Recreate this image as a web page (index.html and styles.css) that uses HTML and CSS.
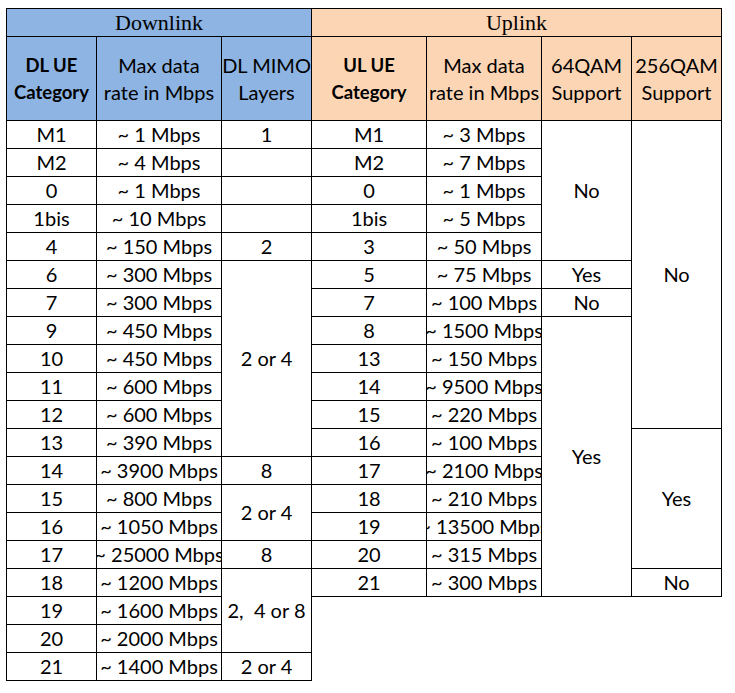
FILE: index.html
```html
<!DOCTYPE html>
<html>
<head>
<meta charset="utf-8">
<link rel="stylesheet" href="styles.css">
</head>
<body>
<table class="ue">
  <colgroup>
    <col class="w90"><col class="w125"><col class="w90">
    <col class="w115"><col class="w115"><col class="w90"><col class="w90">
  </colgroup>
  <tr class="h1">
    <th colspan="3" class="dl title"><div class="c">Downlink</div></th>
    <th colspan="4" class="ul title"><div class="c">Uplink</div></th>
  </tr>
  <tr class="h2">
    <th class="dl"><div class="c b">DL UE<br>Category</div></th>
    <th class="dl"><div class="c">Max data<br>rate in Mbps</div></th>
    <th class="dl"><div class="c">DL MIMO<br>Layers</div></th>
    <th class="ul"><div class="c b">UL UE<br>Category</div></th>
    <th class="ul"><div class="c">Max data<br>rate in Mbps</div></th>
    <th class="ul"><div class="c">64QAM<br>Support</div></th>
    <th class="ul"><div class="c">256QAM<br>Support</div></th>
  </tr>
  <tr><td><div class="c">M1</div></td><td><div class="c">~ 1 Mbps</div></td><td><div class="c">1</div></td><td><div class="c">M1</div></td><td><div class="c">~ 3 Mbps</div></td><td rowspan="5"><div class="c">No</div></td><td rowspan="11"><div class="c">No</div></td></tr>
  <tr><td><div class="c">M2</div></td><td><div class="c">~ 4 Mbps</div></td><td></td><td><div class="c">M2</div></td><td><div class="c">~ 7 Mbps</div></td></tr>
  <tr><td><div class="c">0</div></td><td><div class="c">~ 1 Mbps</div></td><td></td><td><div class="c">0</div></td><td><div class="c">~ 1 Mbps</div></td></tr>
  <tr><td><div class="c">1bis</div></td><td><div class="c">~ 10 Mbps</div></td><td></td><td><div class="c">1bis</div></td><td><div class="c">~ 5 Mbps</div></td></tr>
  <tr><td><div class="c">4</div></td><td><div class="c">~ 150 Mbps</div></td><td><div class="c">2</div></td><td><div class="c">3</div></td><td><div class="c">~ 50 Mbps</div></td></tr>
  <tr><td><div class="c">6</div></td><td><div class="c">~ 300 Mbps</div></td><td rowspan="7"><div class="c">2 or 4</div></td><td><div class="c">5</div></td><td><div class="c">~ 75 Mbps</div></td><td><div class="c">Yes</div></td></tr>
  <tr><td><div class="c">7</div></td><td><div class="c">~ 300 Mbps</div></td><td><div class="c">7</div></td><td><div class="c">~ 100 Mbps</div></td><td><div class="c">No</div></td></tr>
  <tr><td><div class="c">9</div></td><td><div class="c">~ 450 Mbps</div></td><td><div class="c">8</div></td><td><div class="c">~ 1500 Mbps</div></td><td rowspan="10"><div class="c">Yes</div></td></tr>
  <tr><td><div class="c">10</div></td><td><div class="c">~ 450 Mbps</div></td><td><div class="c">13</div></td><td><div class="c">~ 150 Mbps</div></td></tr>
  <tr><td><div class="c">11</div></td><td><div class="c">~ 600 Mbps</div></td><td><div class="c">14</div></td><td><div class="c">~ 9500 Mbps</div></td></tr>
  <tr><td><div class="c">12</div></td><td><div class="c">~ 600 Mbps</div></td><td><div class="c">15</div></td><td><div class="c">~ 220 Mbps</div></td></tr>
  <tr><td><div class="c">13</div></td><td><div class="c">~ 390 Mbps</div></td><td><div class="c">16</div></td><td><div class="c">~ 100 Mbps</div></td><td rowspan="5"><div class="c">Yes</div></td></tr>
  <tr><td><div class="c">14</div></td><td><div class="c">~ 3900 Mbps</div></td><td><div class="c">8</div></td><td><div class="c">17</div></td><td><div class="c">~ 2100 Mbps</div></td></tr>
  <tr><td><div class="c">15</div></td><td><div class="c">~ 800 Mbps</div></td><td rowspan="2"><div class="c">2 or 4</div></td><td><div class="c">18</div></td><td><div class="c">~ 210 Mbps</div></td></tr>
  <tr><td><div class="c">16</div></td><td><div class="c">~ 1050 Mbps</div></td><td><div class="c">19</div></td><td><div class="c">~ 13500 Mbps</div></td></tr>
  <tr><td><div class="c">17</div></td><td><div class="c">~ 25000 Mbps</div></td><td><div class="c">8</div></td><td><div class="c">20</div></td><td><div class="c">~ 315 Mbps</div></td></tr>
  <tr><td><div class="c">18</div></td><td><div class="c">~ 1200 Mbps</div></td><td rowspan="3"><div class="c">2,&nbsp; 4 or 8</div></td><td><div class="c">21</div></td><td><div class="c">~ 300 Mbps</div></td><td><div class="c">No</div></td></tr>
  <tr><td><div class="c">19</div></td><td><div class="c">~ 1600 Mbps</div></td></tr>
  <tr><td><div class="c">20</div></td><td><div class="c">~ 2000 Mbps</div></td></tr>
  <tr><td><div class="c">21</div></td><td><div class="c">~ 1400 Mbps</div></td><td><div class="c">2 or 4</div></td></tr>
</table>
</body>
</html>
```
FILE: styles.css
```css
html, body {
  margin: 0;
  padding: 0;
  background: #ffffff;
}
body {
  padding: 8px 0 0 6px;
  font-family: Lato, "Noto Sans", sans-serif;
  font-size: 20px;
  color: #000000;
}
.ue {
  border-collapse: collapse;
  table-layout: fixed;
  width: 715px;
}
.w90 { width: 90px; }
.w125 { width: 125px; }
.w115 { width: 115px; }
.ue th, .ue td {
  border: 1px solid #000000;
  padding: 0;
  height: 27px;
  font-weight: normal;
  vertical-align: middle;
}
.ue tr.h2 th {
  height: 83px;
}
.dl { background: #8db4e2; }
.ul { background: #fcd5b4; }
.c {
  display: flex;
  justify-content: center;
  align-items: center;
  text-align: center;
  white-space: nowrap;
  overflow: hidden;
  line-height: 27px;
}
.h2 .c {
  white-space: normal;
}
.b {
  font-weight: bold;
  font-size: 18.5px;
  line-height: 27px;
}
.title .c {
  font-family: "Liberation Serif", "DejaVu Serif", serif;
  font-size: 22px;
}
```
